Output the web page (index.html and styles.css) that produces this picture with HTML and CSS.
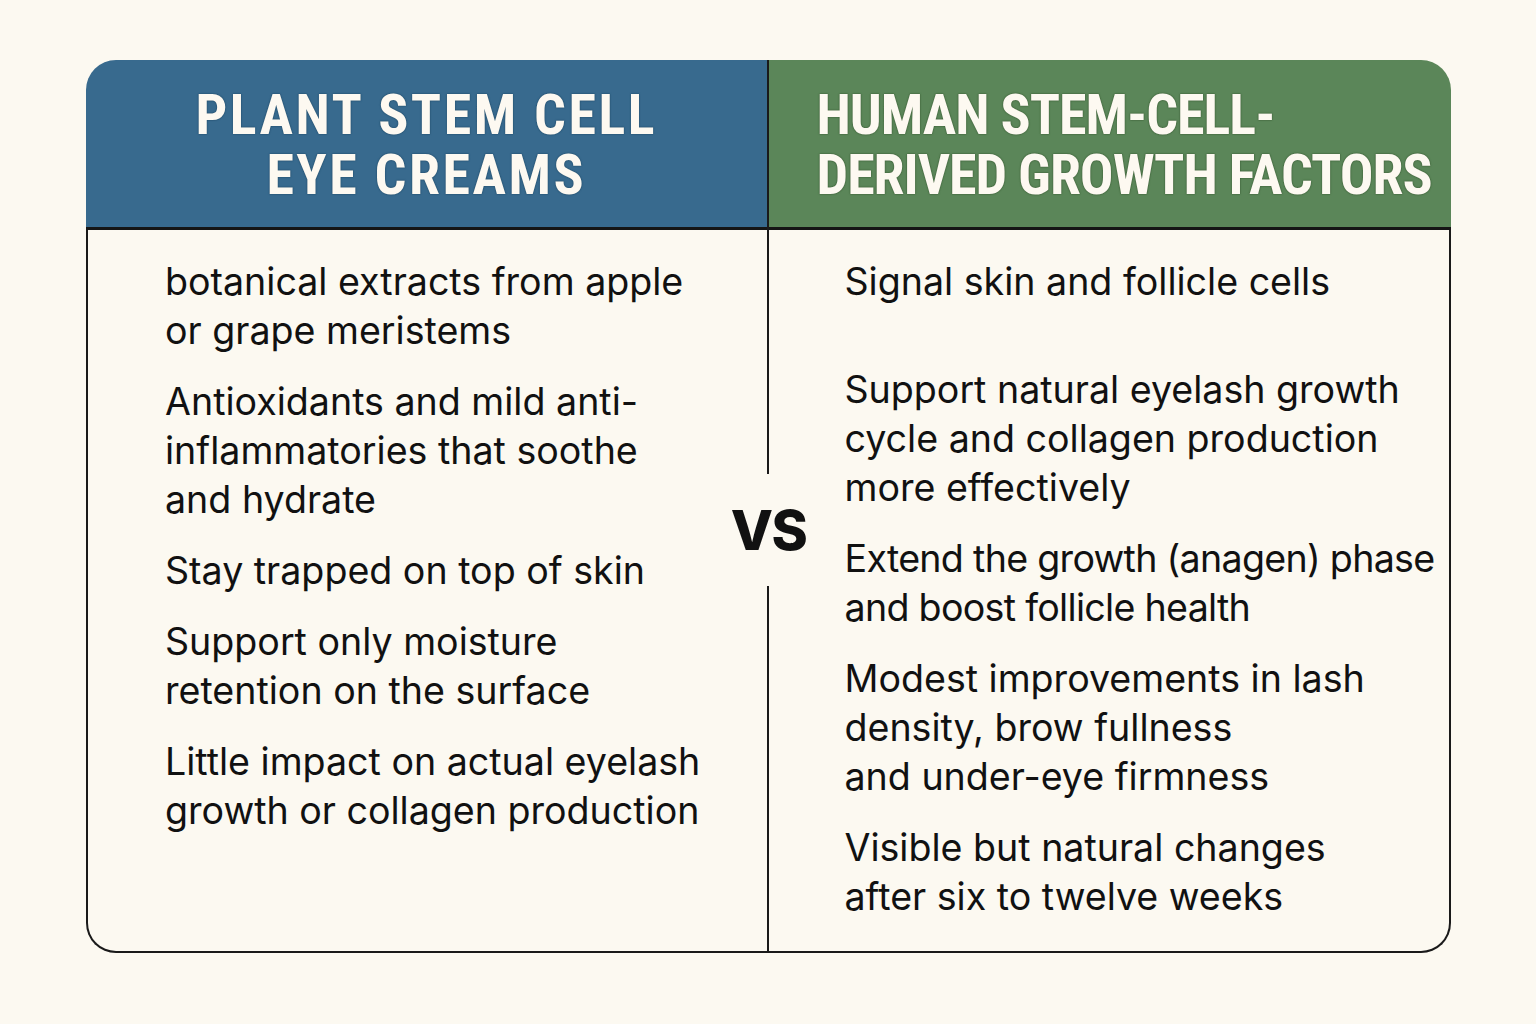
FILE: index.html
```html
<!DOCTYPE html>
<html lang="en">
<head>
    <meta charset="UTF-8">
    <meta name="viewport" content="width=device-width, initial-scale=1.0">
    <title>Plant vs Human Stem Cells</title>
    <link rel="stylesheet" href="styles.css">
</head>
<body>
    <div class="comparison">
        <div class="col col-plant">
            <h2 class="col-head">PLANT STEM CELL<br>EYE CREAMS</h2>
            <ul class="points">
                <li>botanical extracts from apple<br>or grape meristems</li>
                <li>Antioxidants and mild anti-<br>inflammatories that soothe<br>and hydrate</li>
                <li>Stay trapped on top of skin</li>
                <li>Support only moisture<br>retention on the surface</li>
                <li>Little impact on actual eyelash<br>growth or collagen production</li>
            </ul>
        </div>

        <div class="col col-human">
            <h2 class="col-head">HUMAN STEM-CELL-<br>DERIVED GROWTH FACTORS</h2>
            <ul class="points">
                <li class="first">Signal skin and follicle cells</li>
                <li>Support natural eyelash growth<br>cycle and collagen production<br>more effectively</li>
                <li class="tight">Extend the growth (anagen) phase<br>and boost follicle health</li>
                <li>Modest improvements in lash<br>density, brow fullness<br>and under-eye firmness</li>
                <li>Visible but natural changes<br>after six to twelve weeks</li>
            </ul>
        </div>

        <div class="vs">VS</div>
    </div>
</body>
</html>
```

FILE: styles.css
```css
* {
    margin: 0;
    padding: 0;
    box-sizing: border-box;
}

body {
    background: #fcf9f1;
    font-family: 'Inter', 'Roboto', sans-serif;
    color: #111;
    padding: 60px 85px 0 86px;
}

.comparison {
    position: relative;
    display: grid;
    grid-template-columns: 1fr 1fr;
    height: 893px;
}

.col {
    display: flex;
    flex-direction: column;
    min-width: 0;
}

.col-plant {
    border-right: 2px solid #1a1a1a;
}

.col-head {
    height: 170px;
    border-bottom: 3px solid #151515;
    color: #fdf9f1;
    font-family: 'Liberation Sans Narrow', 'Roboto Condensed', 'Roboto', sans-serif;
    font-weight: bold;
    font-size: 56px;
    line-height: 60px;
    padding-top: 25px;
    white-space: nowrap;
}

.col-plant .col-head {
    background: #386a8e;
    border-top-left-radius: 30px;
    text-align: center;
    letter-spacing: 2.5px;
    text-shadow: 0 0 2px #1e4866, 0 0 1px #1e4866;
}

.col-human .col-head {
    background: #5b8659;
    border-top-right-radius: 30px;
    padding-left: 48px;
    letter-spacing: -1px;
    text-shadow: 0 0 2px #35572f, 0 0 1px #35572f;
}

.points {
    flex: 1;
    list-style: none;
    border-bottom: 2px solid #1a1a1a;
    padding-top: 27px;
    font-size: 37.6px;
    line-height: 49px;
    white-space: nowrap;
}

.col-plant .points {
    border-left: 2px solid #1a1a1a;
    border-bottom-left-radius: 30px;
    padding-left: 77px;
}

.col-human .points {
    border-right: 2px solid #1a1a1a;
    border-bottom-right-radius: 30px;
    padding-left: 76px;
}

.points li {
    margin-bottom: 22px;
}

.points li.first {
    margin-bottom: 59px;
}

.points li.tight {
    letter-spacing: -0.7px;
}

.vs {
    position: absolute;
    left: 50%;
    top: 470px;
    transform: translate(-50%, -50%);
    background: #fcf9f1;
    padding: 28px 4px;
    font-family: 'Inter', 'Roboto', sans-serif;
    font-weight: 800;
    font-size: 55px;
    line-height: 56px;
    letter-spacing: -1.5px;
}
```
